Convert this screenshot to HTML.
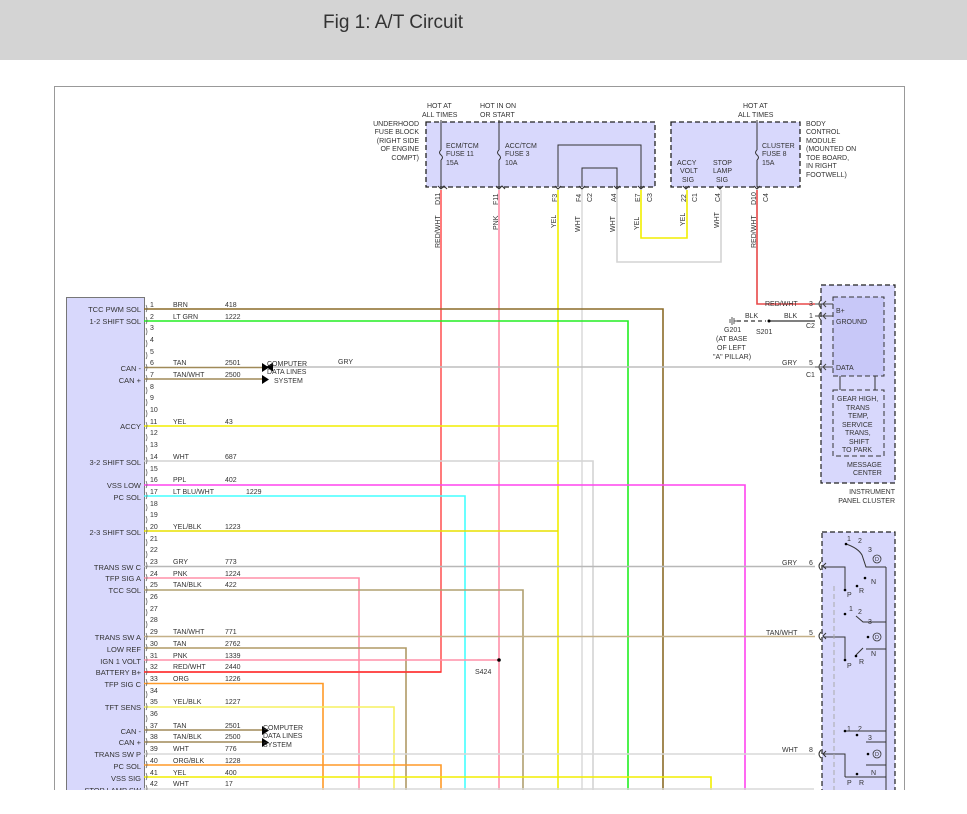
<!DOCTYPE html>
<html><head><meta charset="utf-8"><style>
html,body{margin:0;padding:0;background:#fff;width:967px;height:814px;overflow:hidden}
svg{display:block}
text{font-family:"Liberation Sans",Arial,sans-serif;fill:#333}
.s{font-size:7px}
.m{font-size:7.5px}
</style></head><body>
<svg width="967" height="814" viewBox="0 0 967 814" xmlns="http://www.w3.org/2000/svg">
<rect x="0" y="0" width="967" height="60" fill="#d4d4d4"/>
<text x="323" y="28" style="font-size:19px" fill="#333">Fig 1: A/T Circuit</text>
<rect x="54.5" y="86.5" width="850" height="740" fill="#fff" stroke="#999" stroke-width="1"/>

<rect x="426" y="122" width="229" height="65" fill="#d8d8fc" stroke="#222" stroke-width="1.3" stroke-dasharray="5,3"/>
<rect x="671" y="122" width="129" height="65" fill="#d8d8fc" stroke="#222" stroke-width="1.3" stroke-dasharray="5,3"/>
<g class="s">
<text x="427" y="108">HOT AT</text><text x="422" y="117">ALL TIMES</text>
<text x="480" y="108">HOT IN ON</text><text x="480" y="117">OR START</text>
<text x="743" y="108">HOT AT</text><text x="738" y="117">ALL TIMES</text>
<g text-anchor="end"><text x="419" y="126">UNDERHOOD</text><text x="419" y="134">FUSE BLOCK</text><text x="419" y="143">(RIGHT SIDE</text><text x="419" y="151">OF ENGINE</text><text x="419" y="160">COMPT)</text></g>
<text x="446" y="148">ECM/TCM</text><text x="446" y="156">FUSE 11</text><text x="446" y="165">15A</text>
<text x="505" y="148">ACC/TCM</text><text x="505" y="156">FUSE 3</text><text x="505" y="165">10A</text>
<text x="677" y="165">ACCY</text><text x="680" y="173">VOLT</text><text x="682" y="182">SIG</text>
<text x="713" y="165">STOP</text><text x="713" y="173">LAMP</text><text x="716" y="182">SIG</text>
<text x="762" y="148">CLUSTER</text><text x="762" y="156">FUSE 8</text><text x="762" y="165">15A</text>
<text x="806" y="126">BODY</text><text x="806" y="134">CONTROL</text><text x="806" y="143">MODULE</text><text x="806" y="151">(MOUNTED ON</text><text x="806" y="160">TOE BOARD,</text><text x="806" y="168">IN RIGHT</text><text x="806" y="177">FOOTWELL)</text>
</g>
<g stroke="#333" stroke-width="1" fill="none">
<path d="M441 120V150M441 160V187M441 150q-3 2.5 0 5q3 2.5 0 5"/>
<path d="M499 120V150M499 160V187M499 150q-3 2.5 0 5q3 2.5 0 5"/>
<path d="M757 120V150M757 160V187M757 150q-3 2.5 0 5q3 2.5 0 5"/>
<path d="M558 187V145H641V187"/>
<path d="M582 187V168H617V187"/>
<path d="M438 186l3 3 3-3 3 3M496 186l3 3 3-3 3 3M555 186l3 3 3-3M579 186l3 3 3-3M614 186l3 3 3-3M638 186l3 3 3-3M683 186l3 3 3-3M717 186l3 3 3-3M754 186l3 3 3-3"/>
</g>
<g class="s" font-size="6.5">
<text transform="translate(440,205) rotate(-90)">D11</text>
<text transform="translate(498,205) rotate(-90)">F11</text>
<text transform="translate(557,202) rotate(-90)">F3</text>
<text transform="translate(581,202) rotate(-90)">F4</text>
<text transform="translate(592,202) rotate(-90)">C2</text>
<text transform="translate(616,202) rotate(-90)">A4</text>
<text transform="translate(640,202) rotate(-90)">E7</text>
<text transform="translate(652,202) rotate(-90)">C3</text>
<text transform="translate(686,202) rotate(-90)">22</text>
<text transform="translate(697,202) rotate(-90)">C1</text>
<text transform="translate(720,202) rotate(-90)">C4</text>
<text transform="translate(756,205) rotate(-90)">D10</text>
<text transform="translate(768,202) rotate(-90)">C4</text>
<text transform="translate(440,248) rotate(-90)">RED/WHT</text>
<text transform="translate(498,230) rotate(-90)">PNK</text>
<text transform="translate(556,228) rotate(-90)">YEL</text>
<text transform="translate(580,232) rotate(-90)">WHT</text>
<text transform="translate(615,232) rotate(-90)">WHT</text>
<text transform="translate(639,230) rotate(-90)">YEL</text>
<text transform="translate(685,226) rotate(-90)">YEL</text>
<text transform="translate(719,228) rotate(-90)">WHT</text>
<text transform="translate(756,248) rotate(-90)">RED/WHT</text>
</g>

<rect x="66.5" y="297.5" width="78" height="530" fill="#d8d8fc" stroke="#777" stroke-width="1"/>

<g fill="none" stroke-width="1.6">
<path d="M441 190V672H144" stroke="#ff5a5a"/>
<path d="M499 190V814" stroke="#ff90a8"/>
<path d="M558 190V814" stroke="#f2ee00"/>
<path d="M582 190V814" stroke="#dcdcdc"/>
<path d="M617 190V262H721V190" stroke="#d4d4d4"/>
<path d="M641 190V238H687V190" stroke="#f2ee00"/>
<path d="M757 190V304H815" stroke="#e84848"/>
<path d="M144 309H663V814" stroke="#8c6c28"/>
<path d="M144 321H628V814" stroke="#22ee22"/>
<path d="M144 426H558" stroke="#f2ee00"/>
<path d="M144 461H593V814" stroke="#d4d4d4"/>
<path d="M144 485H745V814" stroke="#ff44ee"/>
<path d="M144 496H465V814" stroke="#44ffff"/>
<path d="M144 531H558" stroke="#e8e000"/>
<path d="M144 566.5H815" stroke="#b8b8b8"/>
<path d="M144 578H359V814" stroke="#ff90a8"/>
<path d="M144 590H523V814" stroke="#b0a070"/>
<path d="M144 636.5H815" stroke="#c4b088"/>
<path d="M144 648H406V814" stroke="#b09a66"/>
<path d="M144 660H499" stroke="#ff90a8"/>
<path d="M144 672H441" stroke="#ff3030"/>
<path d="M144 683.5H323V814" stroke="#ff9a28"/>
<path d="M144 707H394V814" stroke="#f6f060"/>
<path d="M144 730H262M144 742H262" stroke="#a08a58"/>
<path d="M144 754H815" stroke="#d8d8d8"/>
<path d="M144 765H441V814" stroke="#ff9a28"/>
<path d="M144 777H711V814" stroke="#f2ee00"/>
<path d="M144 789H814" stroke="#d8d8d8"/>
<path d="M144 367.5H262M144 379H262" stroke="#a08a58"/>
<path d="M270 367H815" stroke="#bdbdbd"/>
</g>
<circle cx="499" cy="660" r="1.8" fill="#000"/>
<text class="s" x="475" y="674">S424</text>
<g fill="#000">
<path d="M262 363l7 4.5-7 4.5z"/><path d="M262 375l7 4.5-7 4.5z"/>
<path d="M262 726l7 4.5-7 4.5z"/><path d="M262 738l7 4.5-7 4.5z"/>
<path d="M266 367l7-4.5v9z"/>
</g>
<g class="s"><text x="267" y="366">COMPUTER</text><text x="267" y="374">DATA LINES</text><text x="274" y="383">SYSTEM</text>
<text x="263" y="730">COMPUTER</text><text x="263" y="738">DATA LINES</text><text x="263" y="747">SYSTEM</text>
<text x="338" y="364">GRY</text></g>

<g class="m" text-anchor="end">
<text x="141" y="312">TCC PWM SOL</text><text x="141" y="324">1-2 SHIFT SOL</text>
<text x="141" y="371">CAN -</text><text x="141" y="383">CAN +</text>
<text x="141" y="429">ACCY</text><text x="141" y="465">3-2 SHIFT SOL</text>
<text x="141" y="488">VSS LOW</text><text x="141" y="500">PC SOL</text>
<text x="141" y="535">2-3 SHIFT SOL</text><text x="141" y="570">TRANS SW C</text>
<text x="141" y="581">TFP SIG A</text><text x="141" y="593">TCC SOL</text>
<text x="141" y="640">TRANS SW A</text><text x="141" y="652">LOW REF</text>
<text x="141" y="664">IGN 1 VOLT</text><text x="141" y="675">BATTERY B+</text>
<text x="141" y="687">TFP SIG C</text><text x="141" y="710">TFT SENS</text>
<text x="141" y="734">CAN -</text><text x="141" y="745">CAN +</text>
<text x="141" y="757">TRANS SW P</text><text x="141" y="769">PC SOL</text>
<text x="141" y="781">VSS SIG</text><text x="141" y="793">STOP LAMP SW</text>
</g>
<g class="s">
<text x="150" y="307">1</text><text x="150" y="319">2</text><text x="150" y="330">3</text><text x="150" y="342">4</text><text x="150" y="354">5</text><text x="150" y="365">6</text><text x="150" y="377">7</text><text x="150" y="389">8</text><text x="150" y="400">9</text><text x="150" y="412">10</text><text x="150" y="424">11</text><text x="150" y="435">12</text><text x="150" y="447">13</text><text x="150" y="459">14</text><text x="150" y="471">15</text><text x="150" y="482">16</text><text x="150" y="494">17</text><text x="150" y="506">18</text><text x="150" y="517">19</text><text x="150" y="529">20</text><text x="150" y="541">21</text><text x="150" y="552">22</text><text x="150" y="564">23</text><text x="150" y="576">24</text><text x="150" y="587">25</text><text x="150" y="599">26</text><text x="150" y="611">27</text><text x="150" y="622">28</text><text x="150" y="634">29</text><text x="150" y="646">30</text><text x="150" y="658">31</text><text x="150" y="669">32</text><text x="150" y="681">33</text><text x="150" y="693">34</text><text x="150" y="704">35</text><text x="150" y="716">36</text><text x="150" y="728">37</text><text x="150" y="739">38</text><text x="150" y="751">39</text><text x="150" y="763">40</text><text x="150" y="775">41</text><text x="150" y="786">42</text>
</g>
<g class="s">
<text x="173" y="307">BRN</text><text x="225" y="307">418</text>
<text x="173" y="319">LT GRN</text><text x="225" y="319">1222</text>
<text x="173" y="365">TAN</text><text x="225" y="365">2501</text>
<text x="173" y="377">TAN/WHT</text><text x="225" y="377">2500</text>
<text x="173" y="424">YEL</text><text x="225" y="424">43</text>
<text x="173" y="459">WHT</text><text x="225" y="459">687</text>
<text x="173" y="482">PPL</text><text x="225" y="482">402</text>
<text x="173" y="494">LT BLU/WHT</text><text x="246" y="494">1229</text>
<text x="173" y="529">YEL/BLK</text><text x="225" y="529">1223</text>
<text x="173" y="564">GRY</text><text x="225" y="564">773</text>
<text x="173" y="576">PNK</text><text x="225" y="576">1224</text>
<text x="173" y="587">TAN/BLK</text><text x="225" y="587">422</text>
<text x="173" y="634">TAN/WHT</text><text x="225" y="634">771</text>
<text x="173" y="646">TAN</text><text x="225" y="646">2762</text>
<text x="173" y="658">PNK</text><text x="225" y="658">1339</text>
<text x="173" y="669">RED/WHT</text><text x="225" y="669">2440</text>
<text x="173" y="681">ORG</text><text x="225" y="681">1226</text>
<text x="173" y="704">YEL/BLK</text><text x="225" y="704">1227</text>
<text x="173" y="728">TAN</text><text x="225" y="728">2501</text>
<text x="173" y="739">TAN/BLK</text><text x="225" y="739">2500</text>
<text x="173" y="751">WHT</text><text x="225" y="751">776</text>
<text x="173" y="763">ORG/BLK</text><text x="225" y="763">1228</text>
<text x="173" y="775">YEL</text><text x="225" y="775">400</text>
<text x="173" y="786">WHT</text><text x="225" y="786">17</text>
</g>
<g stroke="#555" fill="none" stroke-width="0.7">
<path d="M146 305q2 4 0 7M146 317q2 4 0 7M146 328q2 4 0 7M146 340q2 4 0 7M146 352q2 4 0 7M146 364q2 4 0 7M146 375q2 4 0 7M146 387q2 4 0 7M146 399q2 4 0 7M146 410q2 4 0 7M146 422q2 4 0 7M146 434q2 4 0 7M146 445q2 4 0 7M146 457q2 4 0 7M146 469q2 4 0 7M146 481q2 4 0 7M146 492q2 4 0 7M146 504q2 4 0 7M146 516q2 4 0 7M146 527q2 4 0 7M146 539q2 4 0 7M146 551q2 4 0 7M146 562q2 4 0 7M146 574q2 4 0 7M146 586q2 4 0 7M146 598q2 4 0 7M146 609q2 4 0 7M146 621q2 4 0 7M146 633q2 4 0 7M146 644q2 4 0 7M146 656q2 4 0 7M146 668q2 4 0 7M146 679q2 4 0 7M146 691q2 4 0 7M146 703q2 4 0 7M146 715q2 4 0 7M146 726q2 4 0 7M146 738q2 4 0 7M146 750q2 4 0 7M146 761q2 4 0 7M146 773q2 4 0 7M146 785q2 4 0 7"/>
</g>

<rect x="821" y="285" width="74" height="198" fill="#d8d8fc" stroke="#222" stroke-width="1.2" stroke-dasharray="5,3"/>
<rect x="833" y="297" width="51" height="79" fill="#c8c8f8" stroke="#333" stroke-width="1" stroke-dasharray="5,3"/>
<rect x="833" y="390" width="51" height="66" fill="#d8d8fc" stroke="#333" stroke-width="1" stroke-dasharray="5,3"/>
<path d="M840 376V390M875 376V390" stroke="#333"/>
<g stroke="#444" fill="none" stroke-width="1">
<path d="M815 304H833M815 316H833M815 367H833"/>
<path d="M821 300q-4 4 0 8M821 312q-4 4 0 8M821 363q-4 4 0 8"/>
<path d="M826 301l-3 3 3 3M826 313l-3 3 3 3M826 364l-3 3 3 3"/>
</g>
<g class="s">
<text x="836" y="313">B+</text><text x="836" y="324">GROUND</text><text x="836" y="370">DATA</text>
<text x="837" y="401">GEAR HIGH,</text><text x="846" y="410">TRANS</text><text x="848" y="418">TEMP,</text><text x="842" y="427">SERVICE</text><text x="845" y="435">TRANS,</text><text x="849" y="444">SHIFT</text><text x="842" y="452">TO PARK</text>
<text x="847" y="467">MESSAGE</text><text x="853" y="475">CENTER</text>
<text x="895" y="494" text-anchor="end">INSTRUMENT</text><text x="895" y="503" text-anchor="end">PANEL CLUSTER</text>
<text x="765" y="306">RED/WHT</text><text x="809" y="306">3</text>
<text x="745" y="318">BLK</text><text x="784" y="318">BLK</text><text x="809" y="318">1</text>
<text x="806" y="328">C2</text>
<text x="782" y="365">GRY</text><text x="809" y="365">5</text><text x="806" y="377">C1</text>
<text x="724" y="332">G201</text><text x="716" y="341">(AT BASE</text><text x="717" y="350">OF LEFT</text><text x="713" y="359">"A" PILLAR)</text>
<text x="756" y="334">S201</text>
</g>
<path d="M737 321H766" stroke="#555" stroke-dasharray="4,3" stroke-width="1.5"/>
<path d="M769 321H815" stroke="#555" stroke-width="1.5"/>
<circle cx="769" cy="321" r="1.5" fill="#000"/>
<path d="M732 317V325M734 318V324M730 319V323M734 321H738" stroke="#555"/>

<rect x="822" y="532" width="73" height="290" fill="#d8d8fc" stroke="#222" stroke-width="1.2" stroke-dasharray="5,3"/>
<g class="s">
<text x="782" y="565">GRY</text><text x="809" y="565">6</text>
<text x="766" y="635">TAN/WHT</text><text x="809" y="635">5</text>
<text x="782" y="752">WHT</text><text x="809" y="752">8</text>
</g>
<g stroke="#333" fill="none" stroke-width="1">
<path d="M821 562q-4 4 0 8M821 632q-4 4 0 8M821 750q-4 4 0 8"/>
<path d="M826 563l-3 3 3 3M826 633l-3 3 3 3M826 751l-3 3 3 3"/>
<path d="M823 567H845V590M823 637H845V660M823 754H845V777"/>
<path d="M886 567V814"/>
<path d="M846 544q12 4 16 11l4 12H886"/>
<path d="M856 616l7 6H886M863 648l-7 7M866 649H886"/>
<path d="M845 731H886M866 742H886M866 765H886M845 777H886"/>
<path d="M834 586L834 814" stroke="#aaa" stroke-dasharray="5,3"/>
</g>
<g fill="#000">
<circle cx="846" cy="544" r="1.3"/><circle cx="865" cy="578" r="1.3"/><circle cx="857" cy="586" r="1.3"/><circle cx="845" cy="590" r="1.3"/>
<circle cx="845" cy="614" r="1.3"/><circle cx="868" cy="637" r="1.3"/><circle cx="856" cy="656" r="1.3"/><circle cx="845" cy="660" r="1.3"/>
<circle cx="845" cy="731" r="1.3"/><circle cx="857" cy="735" r="1.3"/><circle cx="868" cy="754" r="1.3"/><circle cx="857" cy="774" r="1.3"/>
</g>
<g class="s" font-size="6.5">
<text x="847" y="541">1</text><text x="858" y="543">2</text><text x="868" y="552">3</text><text x="871" y="584">N</text><text x="859" y="593">R</text><text x="847" y="597">P</text>
<text x="849" y="611">1</text><text x="858" y="614">2</text><text x="868" y="624">3</text><text x="871" y="656">N</text><text x="859" y="664">R</text><text x="847" y="668">P</text>
<text x="847" y="731">1</text><text x="858" y="731">2</text><text x="868" y="740">3</text><text x="871" y="775">N</text><text x="859" y="785">R</text><text x="847" y="785">P</text>
</g>
<g fill="none" stroke="#333" stroke-width="0.8">
<circle cx="877" cy="559" r="4"/><circle cx="877" cy="637" r="4"/><circle cx="877" cy="754" r="4"/>
</g>
<g font-size="5.5" text-anchor="middle"><text x="877" y="561">D</text><text x="877" y="639">D</text><text x="877" y="756">D</text></g>

<rect x="0" y="790" width="967" height="24" fill="#fff"/>
</svg>
</body></html>
